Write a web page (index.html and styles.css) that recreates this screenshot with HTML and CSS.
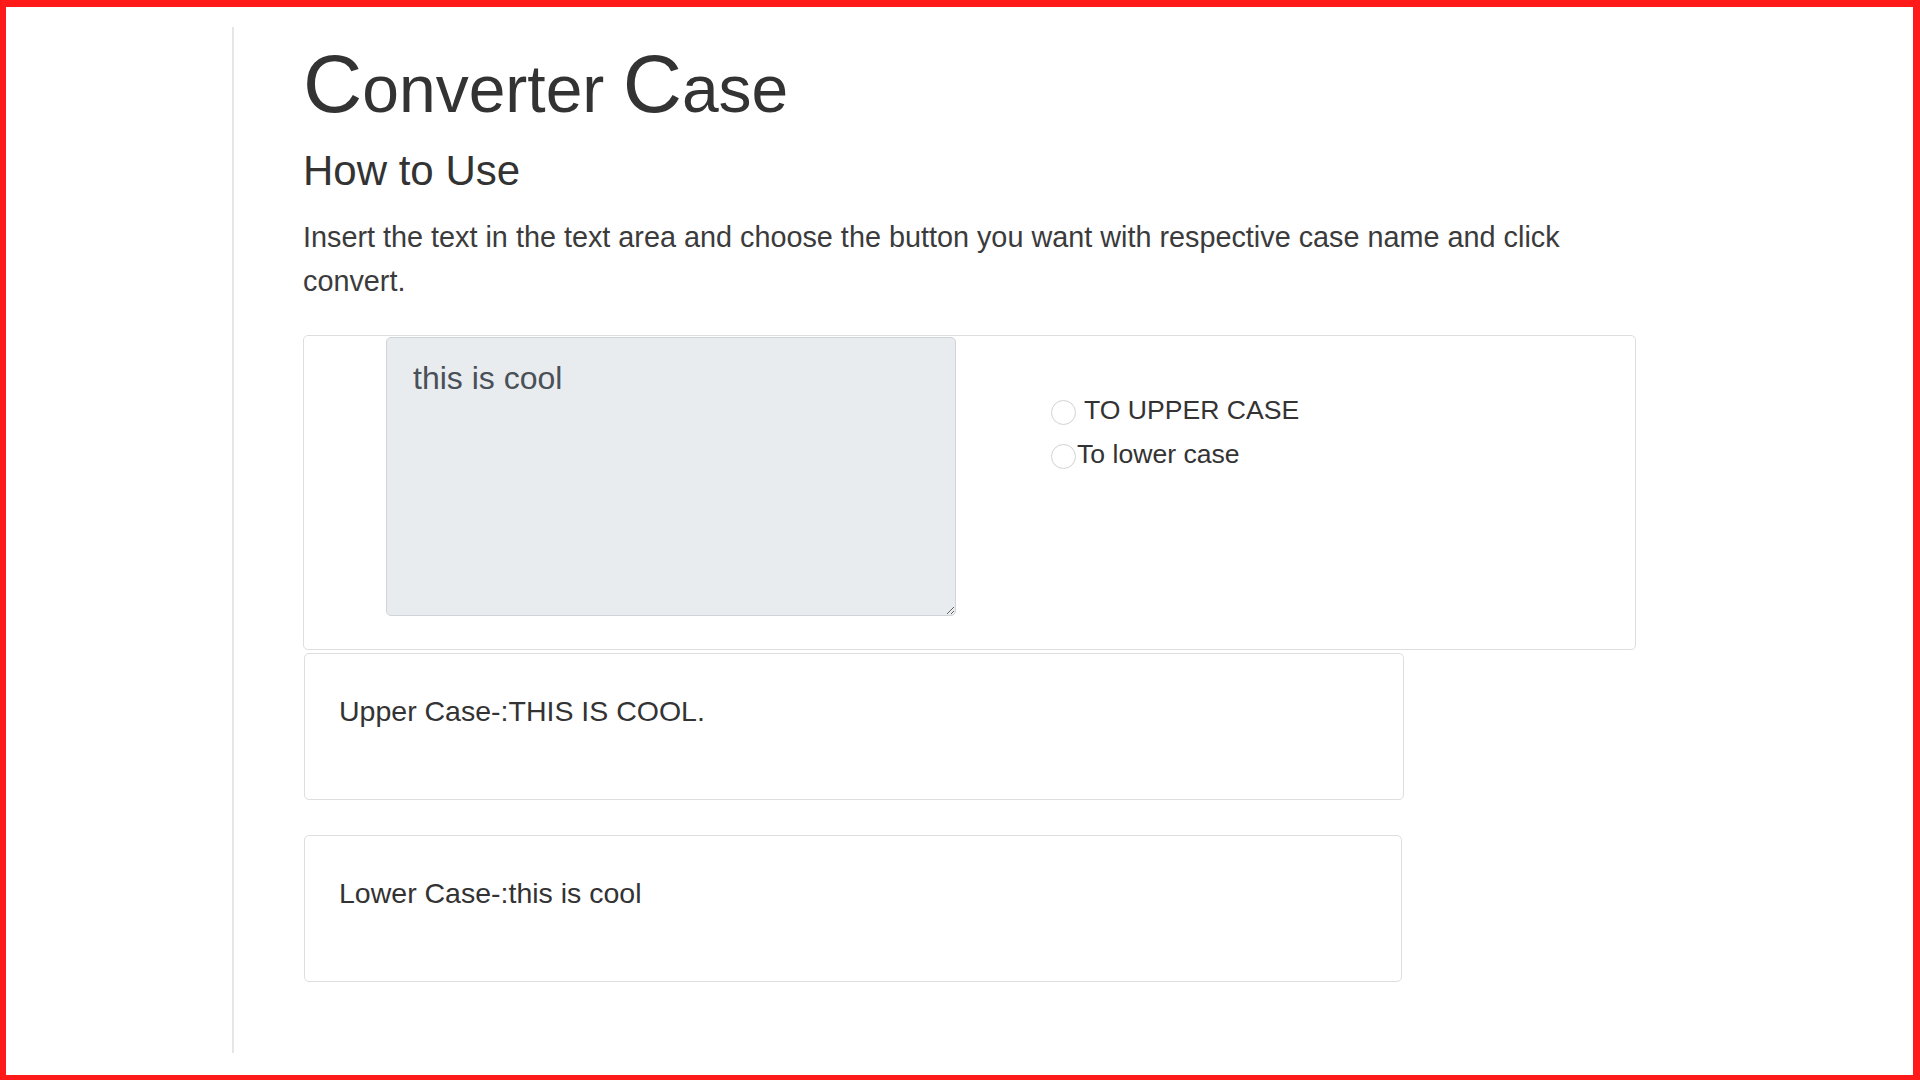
FILE: index.html
```html
<!DOCTYPE html>
<html lang="en">
<head>
    <meta charset="UTF-8">
    <meta name="viewport" content="width=device-width, initial-scale=1.0">
    <title>Converter Case</title>
    <link rel="stylesheet" href="styles.css">
</head>
<body>
    <div class="frame">
        <div class="main">
            <h1><span class="cap">C</span>onverter <span class="cap">C</span>ase</h1>
            <h2>How to Use</h2>
            <p class="intro">Insert the text in the text area and choose the button you want with respective case name and click convert.</p>

            <div class="converter">
                <textarea id="inputText" class="input-text">this is cool</textarea>
                <div class="options">
                    <label class="option"><input type="radio" name="caseType" value="upper"> TO UPPER CASE</label>
                    <label class="option"><input type="radio" name="caseType" value="lower">To lower case</label>
                </div>
            </div>

            <div class="result result-upper">Upper Case-:THIS IS COOL.</div>
            <div class="result result-lower">Lower Case-:this is cool</div>
        </div>
    </div>
</body>
</html>
```

FILE: styles.css
```css
body {
    margin: 0;
    font-family: "Liberation Sans", Arial, sans-serif;
    color: #3b3b3b;
    background-color: #fff;
}
.frame {
    box-sizing: border-box;
    width: 1920px;
    height: 1080px;
    border-style: solid;
    border-color: #ff1a1a;
    border-width: 7px 7px 5px 6px;
    padding: 20px 0 0 226px;
}
.main {
    box-sizing: border-box;
    height: 1026px;
    border-left: 2px solid #e6e6e6;
    padding: 16px 0 0 69px;
}
h1 {
    margin: 0 0 17px 0;
    font-size: 66px;
    font-weight: normal;
    line-height: 80px;
    color: #333;
}
h1 .cap {
    font-size: 82px;
    line-height: 1;
}
h2 {
    margin: 0 0 19px 0;
    font-size: 42px;
    font-weight: normal;
    line-height: 50px;
    color: #333;
}
.intro {
    margin: 0 0 32px 0;
    font-size: 28.8px;
    line-height: 44px;
    width: 1333px;
}
.converter {
    box-sizing: border-box;
    display: flex;
    width: 1333px;
    height: 315px;
    border: 1px solid #dedede;
    border-radius: 5px;
}
.input-text {
    box-sizing: border-box;
    width: 570px;
    height: 279px;
    margin: 1px 0 0 82px;
    padding: 16px 26px;
    border: 1px solid #ced4da;
    border-radius: 5px;
    background-color: #e9ecef;
    color: #495057;
    font-family: "Liberation Sans", Arial, sans-serif;
    font-size: 32px;
    line-height: 48px;
}
.options {
    margin: 52px 0 0 95px;
}
.option {
    display: block;
    font-size: 26.6px;
    line-height: 44px;
    color: #333;
}
.option input {
    appearance: none;
    -webkit-appearance: none;
    box-sizing: border-box;
    width: 25px;
    height: 25px;
    margin: 0 1px 0 0;
    border: 1.5px solid #d2d2d2;
    border-radius: 50%;
    background-color: #fff;
    vertical-align: -6px;
}
.result {
    box-sizing: border-box;
    height: 147px;
    margin-left: 1px;
    padding: 35px 32px 0 34px;
    border: 1px solid #dedede;
    border-radius: 5px;
    font-size: 28.5px;
    line-height: 44px;
    color: #333;
}
.result-upper {
    width: 1100px;
    margin-top: 3px;
}
.result-lower {
    width: 1098px;
    margin-top: 35px;
}
```
